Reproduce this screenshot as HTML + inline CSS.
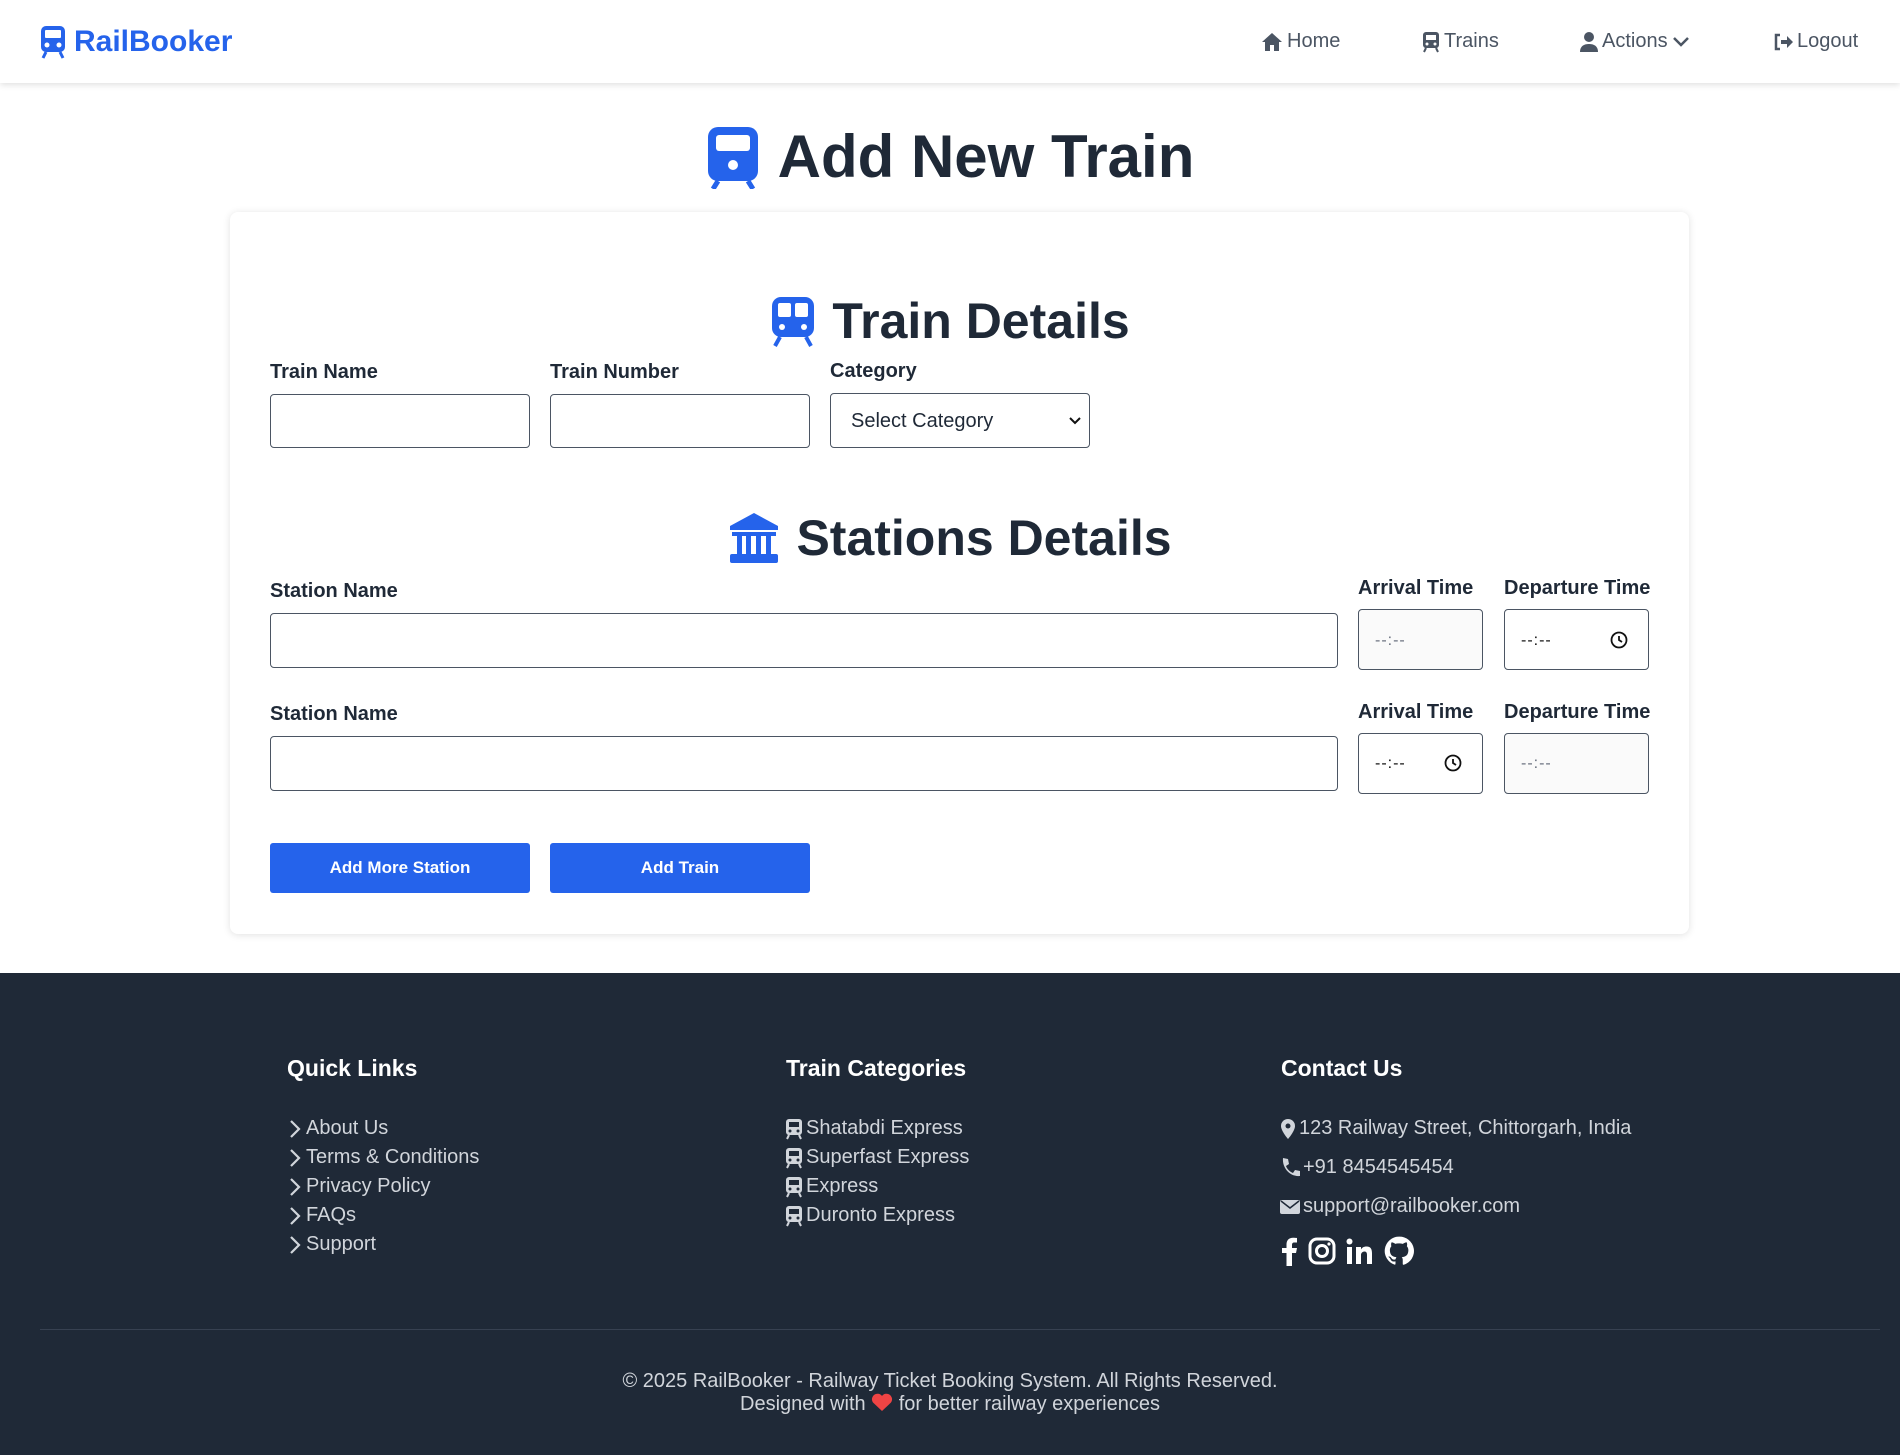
<!DOCTYPE html>
<html><head><meta charset="utf-8"><style>
*{box-sizing:border-box;margin:0;padding:0}
body{width:1900px;height:1455px;position:relative;font-family:"Liberation Sans",Arial,sans-serif;background:#fff;color:#1f2937;overflow:hidden}
.a{position:absolute}
nav{position:absolute;left:0;top:0;width:1900px;height:83px;background:#fff;box-shadow:0 2px 6px rgba(0,0,0,.12);z-index:2}
.nl{position:absolute;top:30px;font-size:20px;color:#4b5563;display:flex;align-items:center;gap:4px}
.card{position:absolute;left:230px;top:212px;width:1459px;height:722px;background:#fff;border-radius:8px;box-shadow:0 1px 8px rgba(0,0,0,.12)}
.lbl{position:absolute;font-size:20px;font-weight:bold;color:#1f2937}
.in{position:absolute;border:1.5px solid #4b5563;border-radius:4px;background:#fff}
.gr{background:#fafafa}
.tm{position:absolute;font-size:16px;color:#6b7280;letter-spacing:1px}
.btn{position:absolute;top:843px;width:260px;height:50px;background:#2563eb;border-radius:3px;color:#fff;font-weight:bold;font-size:17px;display:flex;align-items:center;justify-content:center}
footer{position:absolute;left:0;top:973px;width:1900px;height:482px;background:#1f2937;color:#d1d5db}
.fh{position:absolute;top:82px;font-size:23px;font-weight:bold;color:#fff}
.fi{position:absolute;font-size:20px;display:flex;align-items:center;gap:3px;white-space:nowrap}
.ch{display:inline-block;width:16px}
</style></head><body>
<nav>
 <div class="a" style="left:40px;top:25px;display:flex;align-items:center;gap:8px;color:#2563eb;font-weight:bold;font-size:30px">
  <svg width="26" height="34" viewBox="0 0 26 34"><rect x="1" y="1" width="24" height="26" rx="5" fill="#2563eb"/><rect x="5" y="5" width="16" height="8" rx="1" fill="#fff"/><circle cx="7" cy="20" r="2.5" fill="#fff"/><circle cx="19" cy="20" r="2.5" fill="#fff"/><path d="M6 27l-3 6M20 27l3 6" stroke="#2563eb" stroke-width="3"/></svg>RailBooker</div>
 <div class="nl" style="left:1261px"><svg width="22" height="20" viewBox="0 0 22 20"><path d="M11 1L1 10h3v9h5v-6h4v6h5v-9h3z" fill="#4b5563"/></svg>Home</div>
 <div class="nl" style="left:1422px"><svg width="18" height="22" viewBox="0 0 18 22"><rect x="1" y="1" width="16" height="16" rx="3" fill="#4b5563"/><rect x="4" y="4" width="10" height="5" fill="#fff"/><circle cx="5" cy="13" r="1.5" fill="#fff"/><circle cx="13" cy="13" r="1.5" fill="#fff"/><path d="M4 17l-2 4M14 17l2 4" stroke="#4b5563" stroke-width="2"/></svg>Trains</div>
 <div class="nl" style="left:1580px"><svg width="18" height="20" viewBox="0 0 18 20"><circle cx="9" cy="5" r="5" fill="#4b5563"/><path d="M0 20c0-6 4-8 9-8s9 2 9 8z" fill="#4b5563"/></svg>Actions <svg width="18" height="12" viewBox="0 0 18 12"><path d="M2 2l7 7 7-7" stroke="#4b5563" stroke-width="2.5" fill="none"/></svg></div>
 <div class="nl" style="left:1773px"><svg width="20" height="18" viewBox="0 0 20 18"><path d="M7 2H3v14h4" stroke="#4b5563" stroke-width="2.5" fill="none"/><path d="M8 7h6V3l6 6-6 6v-4H8z" fill="#4b5563"/></svg>Logout</div>
</nav>

<div class="a" style="left:0;width:1900px;top:122px;display:flex;justify-content:center;align-items:center;gap:18px;font-size:60px;font-weight:bold;color:#1f2937">
 <svg width="54" height="64" viewBox="0 0 54 64"><rect x="2" y="2" width="50" height="54" rx="10" fill="#2563eb"/><rect x="10" y="10" width="34" height="16" rx="3" fill="#fff"/><circle cx="27" cy="40" r="5" fill="#fff"/><path d="M12 56l-5 8M42 56l5 8" stroke="#2563eb" stroke-width="5"/></svg>
 <span>Add New Train</span></div>

<div class="card"></div>
<div class="a" style="left:0;width:1900px;top:292px;display:flex;justify-content:center;align-items:center;gap:16px;font-size:50px;font-weight:bold;color:#1f2937">
 <svg width="46" height="52" viewBox="0 0 46 52"><rect x="2" y="2" width="42" height="40" rx="9" fill="#2563eb"/><rect x="8" y="8" width="13" height="14" rx="2" fill="#fff"/><rect x="25" y="8" width="13" height="14" rx="2" fill="#fff"/><circle cx="12" cy="32" r="3" fill="#fff"/><circle cx="34" cy="32" r="3" fill="#fff"/><path d="M10 42l-5 9M36 42l5 9" stroke="#2563eb" stroke-width="4" fill="none"/></svg>
 <span>Train Details</span></div>

<div class="lbl" style="left:270px;top:361px">Train Name</div>
<div class="lbl" style="left:550px;top:361px">Train Number</div>
<div class="lbl" style="left:830px;top:360px">Category</div>
<div class="in" style="left:270px;top:394px;width:260px;height:54px"></div>
<div class="in" style="left:550px;top:394px;width:260px;height:54px"></div>
<div class="in" style="left:830px;top:393px;width:260px;height:55px;font-size:20px;padding:16px 0 0 20px">Select Category<svg class="a" style="right:8px;top:23px" width="12" height="8" viewBox="0 0 12 8"><path d="M1 1l5 5 5-5" stroke="#111" stroke-width="2" fill="none"/></svg></div>

<div class="a" style="left:0;width:1900px;top:509px;display:flex;justify-content:center;align-items:center;gap:16px;font-size:50px;font-weight:bold;color:#1f2937">
 <svg width="52" height="52" viewBox="0 0 52 52"><path d="M26 1L2 14v4h48v-4z" fill="#2563eb"/><rect x="4" y="20" width="44" height="4" fill="#2563eb"/><rect x="9" y="24" width="5" height="18" fill="#2563eb"/><rect x="18" y="24" width="5" height="18" fill="#2563eb"/><rect x="28" y="24" width="5" height="18" fill="#2563eb"/><rect x="38" y="24" width="5" height="18" fill="#2563eb"/><rect x="2" y="42" width="48" height="9" rx="2" fill="#2563eb"/></svg>
 <span>Stations Details</span></div>

<div class="lbl" style="left:270px;top:580px">Station Name</div>
<div class="lbl" style="left:1358px;top:577px">Arrival Time</div>
<div class="lbl" style="left:1504px;top:577px">Departure Time</div>
<div class="in" style="left:270px;top:613px;width:1068px;height:55px"></div>
<div class="in gr" style="left:1358px;top:609px;width:125px;height:61px"></div>
<div class="tm" style="left:1375px;top:632px">--:--</div>
<div class="in" style="left:1504px;top:609px;width:145px;height:61px"></div>
<div class="tm" style="left:1521px;top:632px;color:#111">--:--</div>
<svg class="a" style="left:1610px;top:631px" width="18" height="18" viewBox="0 0 18 18"><circle cx="9" cy="9" r="7.5" stroke="#111" stroke-width="1.8" fill="none"/><path d="M9 5v4l3 2" stroke="#111" stroke-width="1.8" fill="none"/></svg>

<div class="lbl" style="left:270px;top:703px">Station Name</div>
<div class="lbl" style="left:1358px;top:701px">Arrival Time</div>
<div class="lbl" style="left:1504px;top:701px">Departure Time</div>
<div class="in" style="left:270px;top:736px;width:1068px;height:55px"></div>
<div class="in" style="left:1358px;top:733px;width:125px;height:61px"></div>
<div class="tm" style="left:1375px;top:755px;color:#111">--:--</div>
<svg class="a" style="left:1444px;top:754px" width="18" height="18" viewBox="0 0 18 18"><circle cx="9" cy="9" r="7.5" stroke="#111" stroke-width="1.8" fill="none"/><path d="M9 5v4l3 2" stroke="#111" stroke-width="1.8" fill="none"/></svg>
<div class="in gr" style="left:1504px;top:733px;width:145px;height:61px"></div>
<div class="tm" style="left:1521px;top:755px">--:--</div>

<div class="btn" style="left:270px">Add More Station</div>
<div class="btn" style="left:550px">Add Train</div>

<footer>
 <div class="fh" style="left:287px">Quick Links</div>
 <div class="fh" style="left:786px">Train Categories</div>
 <div class="fh" style="left:1281px">Contact Us</div>
 <div class="fi" style="left:287px;top:144px"><svg class="ch" width="16" height="20" viewBox="0 0 16 20"><path d="M4 2l8 8-8 8" stroke="#d1d5db" stroke-width="2.2" fill="none"/></svg>About Us</div>
 <div class="fi" style="left:287px;top:173px"><svg class="ch" width="16" height="20" viewBox="0 0 16 20"><path d="M4 2l8 8-8 8" stroke="#d1d5db" stroke-width="2.2" fill="none"/></svg>Terms &amp; Conditions</div>
 <div class="fi" style="left:287px;top:202px"><svg class="ch" width="16" height="20" viewBox="0 0 16 20"><path d="M4 2l8 8-8 8" stroke="#d1d5db" stroke-width="2.2" fill="none"/></svg>Privacy Policy</div>
 <div class="fi" style="left:287px;top:231px"><svg class="ch" width="16" height="20" viewBox="0 0 16 20"><path d="M4 2l8 8-8 8" stroke="#d1d5db" stroke-width="2.2" fill="none"/></svg>FAQs</div>
 <div class="fi" style="left:287px;top:260px"><svg class="ch" width="16" height="20" viewBox="0 0 16 20"><path d="M4 2l8 8-8 8" stroke="#d1d5db" stroke-width="2.2" fill="none"/></svg>Support</div>

 <div class="fi" style="left:785px;top:144px"><svg width="18" height="22" viewBox="0 0 18 22"><rect x="1" y="1" width="16" height="16" rx="3" fill="#d1d5db"/><rect x="4" y="4" width="10" height="5" fill="#1f2937"/><circle cx="5" cy="13" r="1.5" fill="#1f2937"/><circle cx="13" cy="13" r="1.5" fill="#1f2937"/><path d="M4 17l-2 4M14 17l2 4" stroke="#d1d5db" stroke-width="2"/></svg>Shatabdi Express</div>
 <div class="fi" style="left:785px;top:173px"><svg width="18" height="22" viewBox="0 0 18 22"><rect x="1" y="1" width="16" height="16" rx="3" fill="#d1d5db"/><rect x="4" y="4" width="10" height="5" fill="#1f2937"/><circle cx="5" cy="13" r="1.5" fill="#1f2937"/><circle cx="13" cy="13" r="1.5" fill="#1f2937"/><path d="M4 17l-2 4M14 17l2 4" stroke="#d1d5db" stroke-width="2"/></svg>Superfast Express</div>
 <div class="fi" style="left:785px;top:202px"><svg width="18" height="22" viewBox="0 0 18 22"><rect x="1" y="1" width="16" height="16" rx="3" fill="#d1d5db"/><rect x="4" y="4" width="10" height="5" fill="#1f2937"/><circle cx="5" cy="13" r="1.5" fill="#1f2937"/><circle cx="13" cy="13" r="1.5" fill="#1f2937"/><path d="M4 17l-2 4M14 17l2 4" stroke="#d1d5db" stroke-width="2"/></svg>Express</div>
 <div class="fi" style="left:785px;top:231px"><svg width="18" height="22" viewBox="0 0 18 22"><rect x="1" y="1" width="16" height="16" rx="3" fill="#d1d5db"/><rect x="4" y="4" width="10" height="5" fill="#1f2937"/><circle cx="5" cy="13" r="1.5" fill="#1f2937"/><circle cx="13" cy="13" r="1.5" fill="#1f2937"/><path d="M4 17l-2 4M14 17l2 4" stroke="#d1d5db" stroke-width="2"/></svg>Duronto Express</div>

 <div class="fi" style="left:1280px;top:144px"><svg width="16" height="22" viewBox="0 0 16 22"><path d="M8 1a7 7 0 0 0-7 7c0 5 7 13 7 13s7-8 7-13a7 7 0 0 0-7-7z" fill="#d1d5db"/><circle cx="8" cy="8" r="2.5" fill="#1f2937"/></svg>123 Railway Street, Chittorgarh, India</div>
 <div class="fi" style="left:1280px;top:183px"><svg width="20" height="22" viewBox="0 0 20 22"><path d="M3 1l5 1 1 5-3 2c1 3 4 6 7 7l2-3 5 1 0 5c-10 1-18-8-17-18z" fill="#d1d5db"/></svg>+91 8454545454</div>
 <div class="fi" style="left:1280px;top:222px"><svg width="20" height="16" viewBox="0 0 20 16"><rect x="0" y="1" width="20" height="14" rx="2" fill="#d1d5db"/><path d="M1 2l9 7 9-7" stroke="#1f2937" stroke-width="1.5" fill="none"/></svg>support@railbooker.com</div>
 <div class="a" style="left:1280px;top:263px;display:flex;gap:10px;align-items:center">
  <svg width="18" height="30" viewBox="0 0 18 30"><path d="M12 30V17h4l1-5h-5V9c0-1.5.5-2.5 2.5-2.5H17V2c-1-.2-2.5-.3-4-.3-4 0-6.5 2.4-6.5 6.8V12H2v5h4.5v13z" fill="#fff"/></svg>
  <svg width="28" height="28" viewBox="0 0 28 28"><rect x="2" y="2" width="24" height="24" rx="7" stroke="#fff" stroke-width="3" fill="none"/><circle cx="14" cy="14" r="5.5" stroke="#fff" stroke-width="3" fill="none"/><circle cx="21" cy="7" r="1.6" fill="#fff"/></svg>
  <svg width="28" height="28" viewBox="0 0 28 28"><rect x="1" y="10" width="5" height="17" fill="#fff"/><circle cx="3.5" cy="4.5" r="3" fill="#fff"/><path d="M10 10h5v2.5c1-2 3-3 5.5-3 4.5 0 5.5 3 5.5 7V27h-5v-9c0-2-.5-3.5-2.5-3.5S15 16 15 18v9h-5z" fill="#fff"/></svg>
  <svg width="30" height="30" viewBox="0 0 24 24"><path d="M12 .5a11.5 11.5 0 0 0-3.6 22.4c.6.1.8-.3.8-.6v-2c-3.2.7-3.9-1.5-3.9-1.5-.5-1.3-1.300-1.7-1.3-1.7-1-.7.1-.7.1-.7 1.2.1 1.8 1.2 1.8 1.2 1 1.8 2.7 1.3 3.4 1 .1-.8.4-1.3.7-1.6-2.6-.3-5.3-1.3-5.3-5.7 0-1.3.5-2.3 1.2-3.1-.1-.3-.5-1.5.1-3.1 0 0 1-.3 3.2 1.2a11 11 0 0 1 5.8 0c2.2-1.5 3.2-1.2 3.2-1.2.6 1.6.2 2.8.1 3.1.7.8 1.2 1.8 1.2 3.1 0 4.4-2.7 5.4-5.3 5.7.4.4.8 1.1.8 2.2v3.2c0 .3.2.7.8.6A11.5 11.5 0 0 0 12 .5z" fill="#fff"/></svg>
 </div>
 <div class="a" style="left:40px;top:356px;width:1840px;height:1px;background:#374151"></div>
 <div class="a" style="left:0;width:1900px;top:397px;text-align:center;font-size:20px;line-height:23px">© 2025 RailBooker - Railway Ticket Booking System. All Rights Reserved.<br>Designed with <svg width="22" height="19" viewBox="0 0 22 19" style="vertical-align:-2px"><path d="M11 18L2 9.5A5 5 0 0 1 11 3a5 5 0 0 1 9 6.5z" fill="#ef4444"/></svg> for better railway experiences</div>
</footer>
</body></html>
